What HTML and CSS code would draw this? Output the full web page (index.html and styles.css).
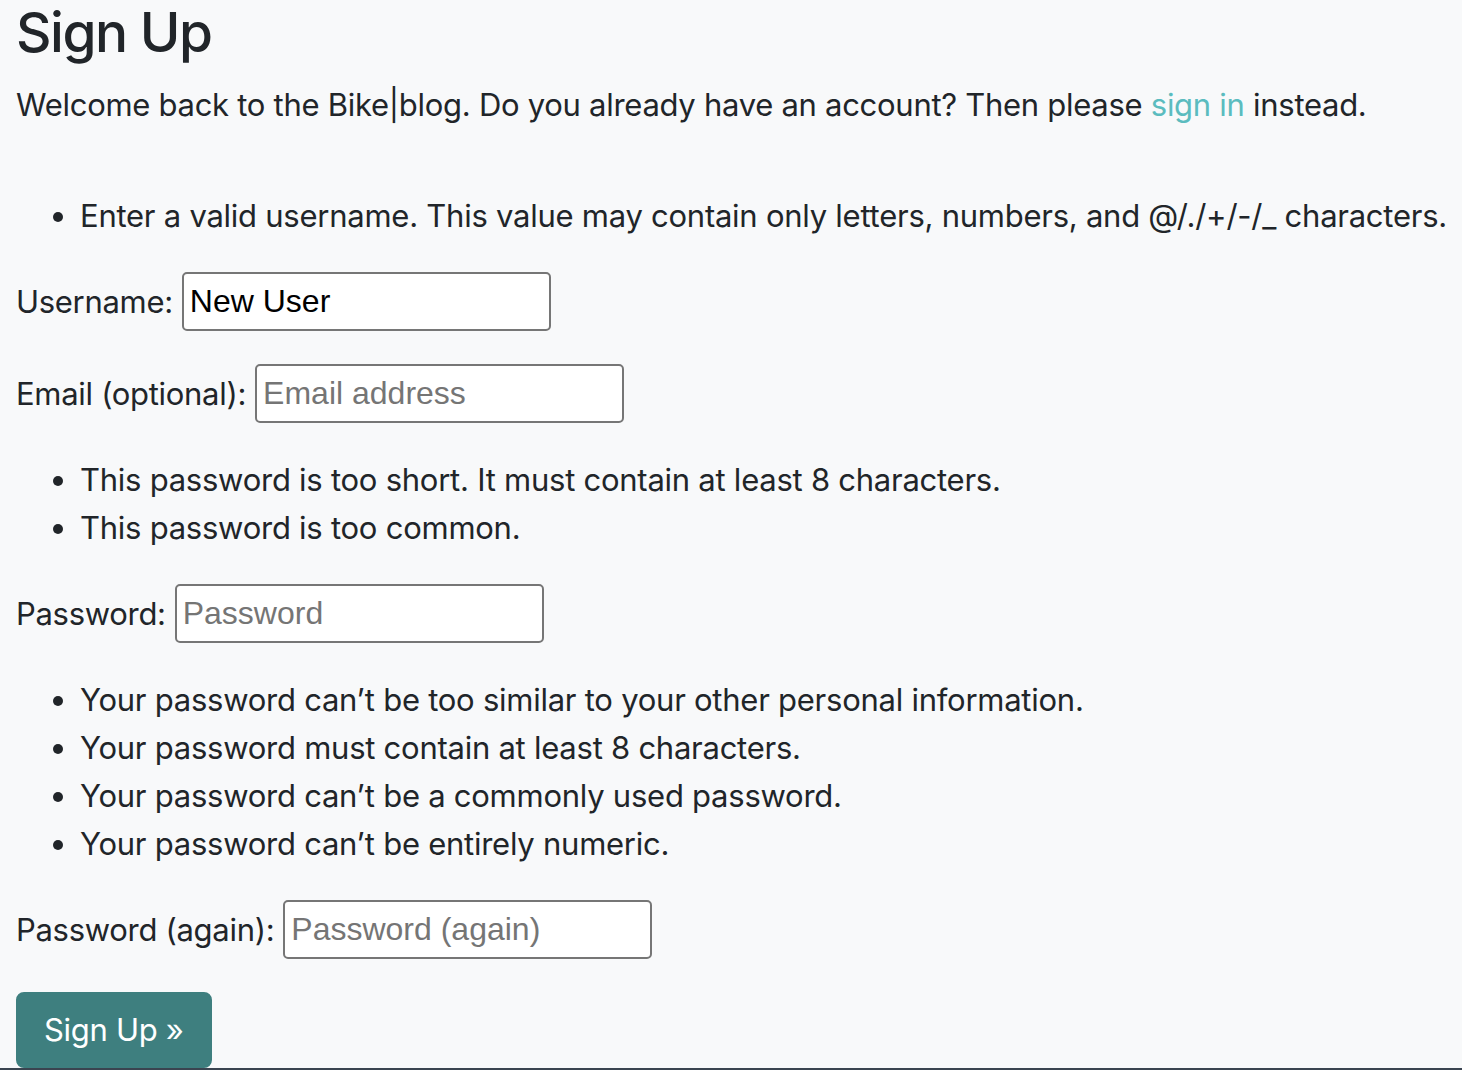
FILE: index.html
```html
<!DOCTYPE html>
<html lang="en">
<head>
<meta charset="utf-8">
<title>Sign Up</title>
<link rel="stylesheet" href="styles.css">
</head>
<body>
<main class="page">
  <h1 class="title">Sign Up</h1>
  <p class="lead">Welcome back to the Bike|blog. Do you already have an account? Then please <a class="link" href="#">sign in</a> instead.</p>
  <form class="signup">
    <ul class="list list-first">
      <li>Enter a valid username. This value may contain only letters, numbers, and @/./+/-/_ characters.</li>
    </ul>
    <div class="field">
      <label class="label" for="u">Username:</label>
      <input class="input" id="u" type="text" value="New User">
    </div>
    <div class="field">
      <label class="label" for="e">Email (optional):</label>
      <input class="input" id="e" type="email" placeholder="Email address">
    </div>
    <ul class="list">
      <li>This password is too short. It must contain at least 8 characters.</li>
      <li>This password is too common.</li>
    </ul>
    <div class="field">
      <label class="label" for="p1">Password:</label>
      <input class="input" id="p1" type="password" placeholder="Password">
    </div>
    <ul class="list">
      <li>Your password can’t be too similar to your other personal information.</li>
      <li>Your password must contain at least 8 characters.</li>
      <li>Your password can’t be a commonly used password.</li>
      <li>Your password can’t be entirely numeric.</li>
    </ul>
    <div class="field">
      <label class="label" for="p2">Password (again):</label>
      <input class="input" id="p2" type="password" placeholder="Password (again)">
    </div>
    <button class="btn" type="submit">Sign Up »</button>
  </form>
</main>
<footer class="footer"></footer>
</body>
</html>
```
FILE: styles.css
```css
html, body {
  margin: 0;
  padding: 0;
  background: #f8f9fa;
}
body {
  font-family: Inter, "Noto Sans", sans-serif;
  font-size: 31px;
  letter-spacing: -0.3px;
  line-height: 48px;
  color: #212529;
  height: 1070px;
  overflow: hidden;
  display: flex;
  flex-direction: column;
}
.page {
  padding: 0 0 0 16px;
  flex: 1;
  min-height: 0;
  overflow: hidden;
}
.title {
  margin: 1px 0 0;
  font-size: 55px;
  font-weight: 500;
  line-height: 62px;
  letter-spacing: -1.5px;
}
.lead {
  margin: 18px 0 0;
  letter-spacing: -0.28px;
}
.link {
  color: #5bbcbf;
  text-decoration: none;
}
.signup {
  margin: 63px 0 0;
}
.list {
  margin: 0;
  padding-left: 64px;
  white-space: nowrap;
  letter-spacing: -0.25px;
}
.field {
  display: flex;
  align-items: center;
  gap: 9px;
  margin: 32px 0 33px;
}
.input {
  box-sizing: border-box;
  width: 369px;
  height: 59px;
  border: 2px solid #767676;
  border-radius: 5px;
  background: #fff;
  padding: 0 6px;
  font-family: "Liberation Sans", Arial, sans-serif;
  font-size: 32px;
  letter-spacing: 0;
  color: #000;
  outline: none;
}
.input::placeholder {
  color: #757575;
}
.btn {
  display: block;
  box-sizing: border-box;
  height: 76px;
  padding: 12px 26px;
  border: 2px solid #3e7f7f;
  border-radius: 8px;
  background: #3e7f7f;
  color: #fff;
  font-family: Inter, "Noto Sans", sans-serif;
  font-size: 31px;
  letter-spacing: -0.3px;
  line-height: 48px;
  margin-top: 0;
}
.footer {
  height: 2px;
  background: #3a4450;
  flex: none;
}
```
